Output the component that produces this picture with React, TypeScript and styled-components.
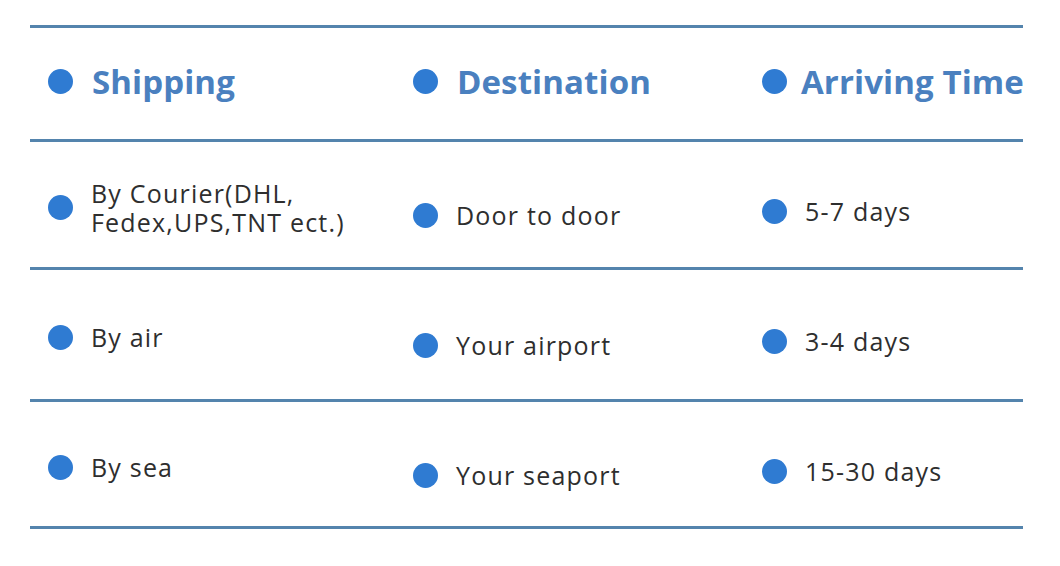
import styled, { createGlobalStyle } from 'styled-components';

const GlobalStyle = createGlobalStyle`
  html, body {
    margin: 0;
    padding: 0;
    background: #ffffff;
  }
  body {
    font-family: "Open Sans", "Noto Sans", sans-serif;
  }
`;

const COLUMNS = [
  { title: 'Shipping', gap: 19 },
  { title: 'Destination', gap: 19 },
  { title: 'Arriving Time', gap: 14 },
];

// vertical nudge of each column inside a body row
const SHIFTS = [3, 11, 7];

const ROWS = [
  { height: 125, cells: ['By Courier(DHL,\nFedex,UPS,TNT ect.)', 'Door to door', '5-7 days'] },
  { height: 129, cells: ['By air', 'Your airport', '3-4 days'] },
  { height: 124, cells: ['By sea', 'Your seaport', '15-30 days'], last: true },
];

const App = () => {
  return (
    <>
      <GlobalStyle />
      <Page>
        <Table>
          <Row $height={111}>
            {COLUMNS.map((col) => (
              <Cell key={col.title} $shift={-2} $gap={col.gap}>
                <Dot />
                <HeadText>{col.title}</HeadText>
              </Cell>
            ))}
          </Row>
          {ROWS.map((row, i) => (
            <Row key={i} $height={row.height} $last={row.last}>
              {row.cells.map((text, j) => (
                <Cell key={j} $shift={SHIFTS[j]}>
                  <Dot />
                  <BodyText>{text}</BodyText>
                </Cell>
              ))}
            </Row>
          ))}
        </Table>
      </Page>
    </>
  );
};

export default App;

const Page = styled.div`
  width: 1060px;
  height: 566px;
  padding: 25px 0 0 30px;
  box-sizing: border-box;
  overflow: hidden;
`;

const Table = styled.div`
  width: 993px;
  display: flex;
  flex-direction: column;
`;

const Row = styled.div<{ $height: number; $last?: boolean }>`
  display: grid;
  grid-template-columns: 365px 349px 1fr;
  height: ${(p) => p.$height}px;
  border-top: 3px solid #5484ad;
  border-bottom: ${(p) => (p.$last ? '3px solid #5484ad' : 'none')};
`;

const Cell = styled.div<{ $shift: number; $gap?: number }>`
  display: flex;
  align-items: center;
  gap: ${(p) => p.$gap ?? 18}px;
  padding-left: 18px;
  box-sizing: border-box;
  height: 100%;
  padding-top: ${(p) => Math.max(p.$shift, 0) * 2}px;
  padding-bottom: ${(p) => Math.max(-p.$shift, 0) * 2}px;
`;

const Dot = styled.span`
  flex: none;
  width: 25px;
  height: 25px;
  border-radius: 50%;
  background: #2f7bd2;
`;

const HeadText = styled.span`
  font-size: 33px;
  font-weight: 700;
  color: #4a80bf;
  letter-spacing: 0.1px;
  white-space: nowrap;
`;

const BodyText = styled.span`
  font-size: 25px;
  line-height: 29px;
  color: #2e2e2e;
  white-space: pre-line;
  letter-spacing: 1.2px;
`;
